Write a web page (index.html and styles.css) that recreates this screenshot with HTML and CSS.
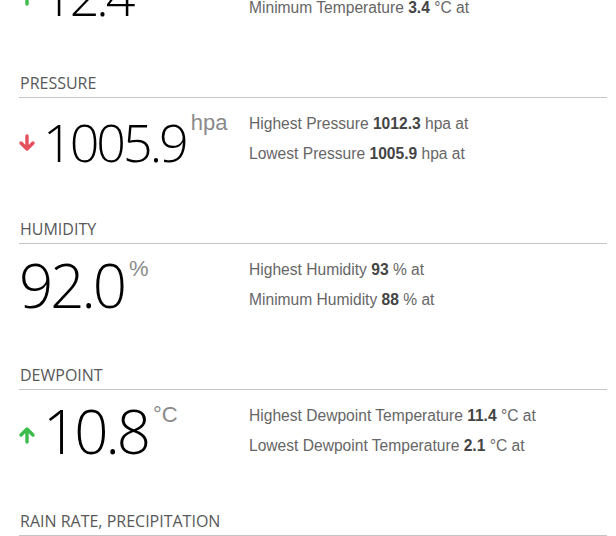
FILE: index.html
```html
<!DOCTYPE html>
<html>
<head>
<meta charset="utf-8">
<link rel="stylesheet" href="styles.css">
</head>
<body>
<main class="panel">
  <section class="block">
    <h2 class="block-title">TEMPERATURE</h2>
    <div class="block-row">
      <div class="reading">
        <span class="trend up"><svg viewBox="0 0 18 18" width="18" height="18"><path d="M9 16V3M3 9l6-6 6 6" fill="none" stroke="currentColor" stroke-width="3.4" stroke-linecap="round" stroke-linejoin="round"/></svg></span>
        <span class="value">12.4</span><span class="unit">°C</span>
      </div>
      <ul class="stats">
        <li>Highest Temperature <b>12.4</b> °C at</li>
        <li>Minimum Temperature <b>3.4</b> °C at</li>
      </ul>
    </div>
  </section>

  <section class="block">
    <h2 class="block-title">PRESSURE</h2>
    <div class="block-row">
      <div class="reading">
        <span class="trend down"><svg viewBox="0 0 18 18" width="18" height="18"><path d="M9 2v13M3 9l6 6 6-6" fill="none" stroke="currentColor" stroke-width="3.4" stroke-linecap="round" stroke-linejoin="round"/></svg></span>
        <span class="value">1005.9</span><span class="unit">hpa</span>
      </div>
      <ul class="stats">
        <li>Highest Pressure <b>1012.3</b> hpa at</li>
        <li>Lowest Pressure <b>1005.9</b> hpa at</li>
      </ul>
    </div>
  </section>

  <section class="block">
    <h2 class="block-title">HUMIDITY</h2>
    <div class="block-row">
      <div class="reading">
        <span class="value large">92.0</span><span class="unit">%</span>
      </div>
      <ul class="stats">
        <li>Highest Humidity <b>93</b> % at</li>
        <li>Minimum Humidity <b>88</b> % at</li>
      </ul>
    </div>
  </section>

  <section class="block">
    <h2 class="block-title">DEWPOINT</h2>
    <div class="block-row">
      <div class="reading">
        <span class="trend up"><svg viewBox="0 0 18 18" width="18" height="18"><path d="M9 16V3M3 9l6-6 6 6" fill="none" stroke="currentColor" stroke-width="3.4" stroke-linecap="round" stroke-linejoin="round"/></svg></span>
        <span class="value large">10.8</span><span class="unit">°C</span>
      </div>
      <ul class="stats">
        <li>Highest Dewpoint Temperature <b>11.4</b> °C at</li>
        <li>Lowest Dewpoint Temperature <b>2.1</b> °C at</li>
      </ul>
    </div>
  </section>

  <section class="block">
    <h2 class="block-title">RAIN RATE, PRECIPITATION</h2>
  </section>
</main>
</body>
</html>
```
FILE: styles.css
```css
html, body {
  margin: 0;
  padding: 0;
  background: #fff;
}
body {
  font-family: "Liberation Sans", Arial, sans-serif;
  overflow: hidden;
}
.panel {
  margin-top: -74px;
  padding: 0 9px 0 19px;
}
.block {
  height: 146px;
  box-sizing: border-box;
}
.block-title {
  margin: 0;
  padding: 0 0 3px 1px;
  font-family: "Open Sans", sans-serif;
  font-weight: 400;
  font-size: 16px;
  line-height: 22px;
  color: #585858;
  border-bottom: 1px solid #c4c4c4;
}
.block-row {
  display: flex;
  align-items: flex-start;
  margin-top: 11px;
}
.reading {
  width: 230px;
  display: flex;
  align-items: flex-start;
}
.trend {
  display: flex;
  width: 18px;
  height: 66px;
  align-items: center;
  margin-left: -1px;
  margin-right: 7px;
}
.trend svg { display: block; margin-top: 1px; }
.trend.up { color: #3dbb4c; }
.trend.down { color: #e5505c; }
.value {
  font-family: "Open Sans", sans-serif;
  font-weight: 300;
  font-size: 52px;
  line-height: 66px;
  color: #000;
  letter-spacing: -3px;
}
.value.large {
  font-size: 60px;
  line-height: 60px;
  letter-spacing: -3px;
}
.unit {
  margin-left: 5px;
  font-size: 22px;
  line-height: 28px;
  color: #8a8a8a;
}
.stats {
  list-style: none;
  margin: 0;
  padding: 0;
}
.stats li {
  font-size: 15.6px;
  line-height: 30px;
  color: #666;
}
.stats b {
  color: #444;
}
```
